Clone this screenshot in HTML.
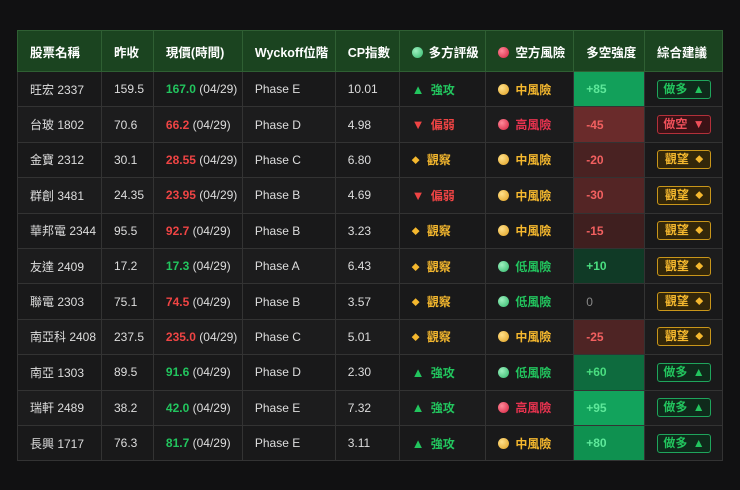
<!DOCTYPE html><html><head><meta charset="utf-8"><style>
body{margin:0;background:#111112;width:740px;height:490px;overflow:hidden;font-family:"Liberation Sans","Noto Sans CJK TC",sans-serif;}
table{position:absolute;left:17px;top:30px;border-collapse:collapse;width:706px;font-size:12px;color:#ddd;}
th{background:#1b4420;color:#fff;font-weight:bold;height:40px;border:1px solid #2f5f33;text-align:left;padding:0 0 0 12px;font-size:12.5px}
td{height:34.4px;border:1px solid #333;padding:0 0 0 12px;white-space:nowrap}
tr:nth-child(odd) td{background:#1c1c1d}tr:nth-child(even) td{background:#19191a}
.g{color:#22c55e;font-weight:bold}.r{color:#ef4444;font-weight:bold}.y{color:#f5b82e;font-weight:bold}.rr{color:#e8334f;font-weight:bold}
.dot{display:inline-block;width:11px;height:11px;border-radius:50%;vertical-align:-1px;margin-right:6px}
.dg{background:radial-gradient(circle at 35% 35%,#9ff0c0,#2fb86a)}.dr{background:radial-gradient(circle at 35% 35%,#ff8a9a,#d61f3e)}.dy{background:radial-gradient(circle at 35% 35%,#ffe08a,#e0a020)}
.b{display:inline-block;width:52px;height:17px;line-height:17px;border-radius:3px;text-align:center;font-weight:bold;font-size:12px;margin-left:0}
.bg{border:1px solid #1fa55c;background:#0f2a1b;color:#22c55e}.br{border:1px solid #b3303a;background:#3a1216;color:#f0505a}.by{border:1px solid #c9961a;background:#33270a;color:#f5b82e}
td.s{font-weight:bold}
.d{font-size:8px;vertical-align:1px;margin-right:4px}.b .d{margin:0 0 0 3px}
.t{font-size:13px;margin-right:3px}.b .t{margin:0 0 0 2px;font-size:12px}
</style></head><body>
<table>
<colgroup><col style="width:84px"><col style="width:52px"><col style="width:89px"><col style="width:93px"><col style="width:64px"><col style="width:87px"><col style="width:88px"><col style="width:71px"><col style="width:78px"></colgroup>
<tr><th>股票名稱</th><th>昨收</th><th>現價(時間)</th><th>Wyckoff位階</th><th>CP指數</th><th><span class="dot dg"></span>多方評級</th><th><span class="dot dr"></span>空方風險</th><th>多空強度</th><th>綜合建議</th></tr>
<tr><td>旺宏 2337</td><td>159.5</td><td><span class="g">167.0</span> (04/29)</td><td>Phase E</td><td>10.01</td><td class="g"><span class="t">▲</span> 強攻</td><td class="y"><span class="dot dy"></span>中風險</td><td class="s" style="background:#12a05a!important;color:#5ee89a">+85</td><td><span class="b bg">做多 <span class="t">▲</span></span></td></tr>
<tr><td>台玻 1802</td><td>70.6</td><td><span class="r">66.2</span> (04/29)</td><td>Phase D</td><td>4.98</td><td class="r"><span class="t">▼</span> 偏弱</td><td class="rr"><span class="dot dr"></span>高風險</td><td class="s" style="background:#6a2b2b!important;color:#f26060">-45</td><td><span class="b br">做空 <span class="t">▼</span></span></td></tr>
<tr><td>金寶 2312</td><td>30.1</td><td><span class="r">28.55</span> (04/29)</td><td>Phase C</td><td>6.80</td><td class="y"><span class="d">◆</span> 觀察</td><td class="y"><span class="dot dy"></span>中風險</td><td class="s" style="background:#492222!important;color:#f26060">-20</td><td><span class="b by">觀望 <span class="d">◆</span></span></td></tr>
<tr><td>群創 3481</td><td>24.35</td><td><span class="r">23.95</span> (04/29)</td><td>Phase B</td><td>4.69</td><td class="r"><span class="t">▼</span> 偏弱</td><td class="y"><span class="dot dy"></span>中風險</td><td class="s" style="background:#542525!important;color:#f26060">-30</td><td><span class="b by">觀望 <span class="d">◆</span></span></td></tr>
<tr><td>華邦電 2344</td><td>95.5</td><td><span class="r">92.7</span> (04/29)</td><td>Phase B</td><td>3.23</td><td class="y"><span class="d">◆</span> 觀察</td><td class="y"><span class="dot dy"></span>中風險</td><td class="s" style="background:#3f1f1f!important;color:#f26060">-15</td><td><span class="b by">觀望 <span class="d">◆</span></span></td></tr>
<tr><td>友達 2409</td><td>17.2</td><td><span class="g">17.3</span> (04/29)</td><td>Phase A</td><td>6.43</td><td class="y"><span class="d">◆</span> 觀察</td><td class="g"><span class="dot dg"></span>低風險</td><td class="s" style="background:#103a26!important;color:#4ade80">+10</td><td><span class="b by">觀望 <span class="d">◆</span></span></td></tr>
<tr><td>聯電 2303</td><td>75.1</td><td><span class="r">74.5</span> (04/29)</td><td>Phase B</td><td>3.57</td><td class="y"><span class="d">◆</span> 觀察</td><td class="g"><span class="dot dg"></span>低風險</td><td style="color:#888">0</td><td><span class="b by">觀望 <span class="d">◆</span></span></td></tr>
<tr><td>南亞科 2408</td><td>237.5</td><td><span class="r">235.0</span> (04/29)</td><td>Phase C</td><td>5.01</td><td class="y"><span class="d">◆</span> 觀察</td><td class="y"><span class="dot dy"></span>中風險</td><td class="s" style="background:#4e2424!important;color:#f26060">-25</td><td><span class="b by">觀望 <span class="d">◆</span></span></td></tr>
<tr><td>南亞 1303</td><td>89.5</td><td><span class="g">91.6</span> (04/29)</td><td>Phase D</td><td>2.30</td><td class="g"><span class="t">▲</span> 強攻</td><td class="g"><span class="dot dg"></span>低風險</td><td class="s" style="background:#0e6b3e!important;color:#4ade80">+60</td><td><span class="b bg">做多 <span class="t">▲</span></span></td></tr>
<tr><td>瑞軒 2489</td><td>38.2</td><td><span class="g">42.0</span> (04/29)</td><td>Phase E</td><td>7.32</td><td class="g"><span class="t">▲</span> 強攻</td><td class="rr"><span class="dot dr"></span>高風險</td><td class="s" style="background:#12a35c!important;color:#5ee89a">+95</td><td><span class="b bg">做多 <span class="t">▲</span></span></td></tr>
<tr><td>長興 1717</td><td>76.3</td><td><span class="g">81.7</span> (04/29)</td><td>Phase E</td><td>3.11</td><td class="g"><span class="t">▲</span> 強攻</td><td class="y"><span class="dot dy"></span>中風險</td><td class="s" style="background:#0f9150!important;color:#5ee89a">+80</td><td><span class="b bg">做多 <span class="t">▲</span></span></td></tr>
</table>
</body></html>
